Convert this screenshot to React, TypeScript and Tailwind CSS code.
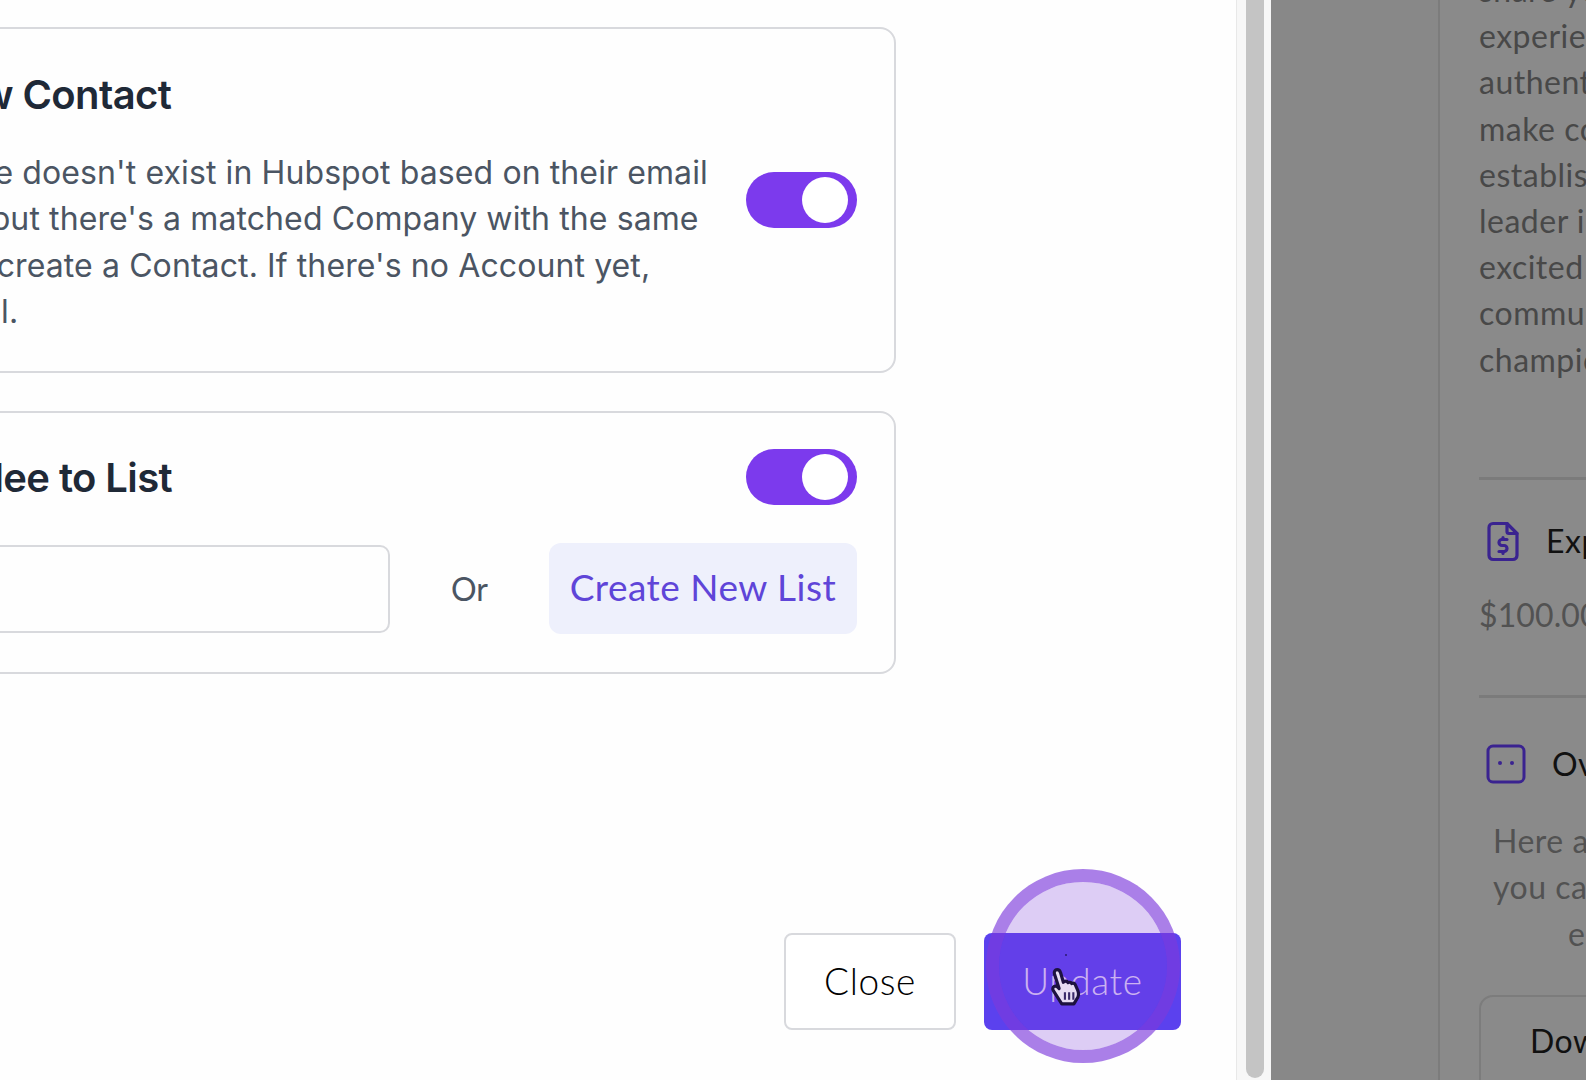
import { TbFileDollar } from 'react-icons/tb';

const inter = 'font-["Inter",sans-serif]';
const lato = 'font-["Lato",sans-serif]';

function Toggle() {
  return (
    <div className="flex h-[56px] w-[111px] shrink-0 items-center justify-end rounded-full bg-[#7c3aed] pr-[9px]">
      <div className="h-[46px] w-[46px] rounded-full bg-white" />
    </div>
  );
}

function HandCursor() {
  return (
    <svg viewBox="0 0 32 38" className="absolute left-[64px] top-[34px] h-[40px] w-[37px]">
      <path
        d="M7 2.500c2 0 3 1.400 3.400 3l2.600 9 1-.6c1.400-.7 2.800-.2 3.500 1 1.200-.8 2.700-.4 3.400.8 1.300-.6 2.700-.2 3.400 1l2.400 5.500c1.200 3 .7 6.200-1.100 8.500l-2.600 4.300H11.500L3.500 22.500c-1-1.500-.6-3.200.8-4 1.100-.6 2.300-.3 3.200.5l1.500 1.500L4.500 6.500C4 4.500 5.200 2.500 7 2.500z"
        fill="#e6dcf3"
        stroke="#1d1240"
        strokeWidth="3"
        strokeLinejoin="round"
      />
      <path d="M14.500 24v7M18.500 24v7M22.500 24v7" stroke="#3a2a6a" strokeWidth="2" />
    </svg>
  );
}

function SettingsPanel() {
  return (
    <div className="flex h-full w-[1237px] shrink-0 flex-col border-r border-[#e8e8e8] bg-[#fefefe]">
      <div className="ml-[-259px] flex w-[1155px] flex-col gap-[38px] pt-[27px]">
        <div className="flex h-[346px] flex-col rounded-[16px] border-2 border-[#d8d9dd] pl-[50px] pr-[37px] pt-[41px]">
          <h3 className={`${inter} text-[40px] font-semibold leading-[50px] tracking-[-0.6px] text-[#1f2937]`}>
            Create New Contact
          </h3>
          <div className="mt-[30px] flex items-start justify-between">
            <p className={`${inter} whitespace-nowrap text-[32px] leading-[46.300px] tracking-[0.1px] text-[#4b5563]`}>
              If the attendee doesn't exist in Hubspot based on their email
              <br />
              the address, but there's a matched Company with the same
              <br />
              web domain, create a Contact. If there's no Account yet,
              <br />
              do this as well.
            </p>
            <div className="mt-[22px]">
              <Toggle />
            </div>
          </div>
        </div>
        <div className="flex h-[263px] flex-col rounded-[16px] border-2 border-[#d8d9dd] pl-[50px] pr-[37px] pt-[35px]">
          <div className="flex items-center justify-between">
            <h3 className={`${inter} pt-[2px] text-[40px] font-semibold leading-[56px] tracking-[-0.6px] text-[#1f2937]`}>
              Add Attendee to List
            </h3>
            <Toggle />
          </div>
          <div className="mt-[37px] flex items-center">
            <div className="h-[88px] w-[597px] rounded-[10px] border-2 border-[#d8d9dd]" />
            <span className={`${lato} ml-[61px] text-[32px] text-[#4b5563]`}>Or</span>
            <button className={`${lato} ml-[61px] h-[91px] w-[308px] rounded-[12px] bg-[#eef0fc] pb-[3px] text-[37px] tracking-[0.5px] text-[#5f45d8]`}>
              Create New List
            </button>
          </div>
        </div>
      </div>
      <div className="mt-auto flex justify-end gap-[28px] pb-[50px] pr-[55px]">
        <button className={`${lato} h-[97px] w-[172px] rounded-[8px] border-2 border-[#d8d9dd] bg-white pb-[2px] text-[37px] font-light tracking-[0.6px] text-black`}>
          Close
        </button>
        <div className="relative">
          <button className={`${lato} h-[97px] w-[197px] rounded-[8px] bg-[#5b41ee] pb-[2px] text-[37px] font-light tracking-[0.6px] text-[#e6daf9]`}>
            Update
          </button>
          <div className="absolute left-[2px] top-[-64px] h-[194px] w-[194px] rounded-full border-[13px] border-[#7c3adc]/65 bg-[#7c3adc]/25 bg-clip-padding" />
          <div className="absolute left-[81px] top-[21px] h-[2px] w-[2px] rounded-full bg-[#2a1a70]" />
          <HandCursor />
        </div>
      </div>
    </div>
  );
}

function Scrollbar() {
  return (
    <div className="flex h-full w-[34px] shrink-0 bg-[#f7f7f7] pl-[9px] pr-[7px]">
      <div className="mb-[2px] h-[1078px] w-[18px] rounded-b-full bg-[#c4c4c4]" />
    </div>
  );
}

function DetailPanel() {
  const lines = ['share your', 'experience', 'authentic', 'make connections', 'establish', 'leader in', 'excited', 'community', 'champion'];
  return (
    <div className="flex h-full min-w-0 flex-1 bg-[#888888]">
      <div className="h-full w-[169px] shrink-0 border-r-2 border-[#7c7c7c]" />
      <div className={`${lato} min-w-0 flex-1 overflow-hidden bg-[#8a8a8a] pl-[39px] tracking-[0.5px]`}>
        <div className="mt-[-33px] w-[400px] text-[32px] leading-[46.200px] text-[#484848]">
          {lines.map((l) => (
            <div key={l} className="whitespace-nowrap">{l}</div>
          ))}
        </div>
        <div className="mt-[94px] h-[3px] w-[400px] bg-[#7b7b7b]" />
        <div className="mt-[35px] flex h-[53px] w-[400px] items-center text-[32px] text-[#111111]">
          <TbFileDollar className="h-[53px] w-[48px] text-[#3a2390]" strokeWidth={1.600} />
          <span className="ml-[19px] whitespace-nowrap">Expected Budget</span>
        </div>
        <div className="mt-[24px] w-[400px] text-[32px] leading-[46px] tracking-[0.1px] text-[#525252]">$100.00</div>
        <div className="mt-[57px] h-[3px] w-[400px] bg-[#7b7b7b]" />
        <div className="mt-[46px] flex h-[40px] w-[400px] items-center pl-[7px] text-[32px] text-[#111111]">
          <svg viewBox="0 0 40 40" className="h-[40px] w-[40px] text-[#3a2390]" fill="none" stroke="currentColor" strokeWidth="3">
            <rect x="2" y="2" width="36" height="36" rx="5" />
            <circle cx="14" cy="19" r="2" fill="currentColor" stroke="none" />
            <circle cx="26" cy="19" r="2" fill="currentColor" stroke="none" />
          </svg>
          <span className="ml-[26px] whitespace-nowrap">Overview</span>
        </div>
        <div className="mt-[34px] w-[400px] pl-[14px] text-[32px] leading-[46.500px] text-[#525252]">
          <div className="whitespace-nowrap">Here are</div>
          <div className="whitespace-nowrap">you can</div>
          <div className="whitespace-nowrap pl-[75px]">email</div>
        </div>
        <div className="mt-[38px] h-[120px] w-[400px] rounded-[14px] border-2 border-[#7c7c7c] pl-[49px] pt-[20px] text-[32px] text-[#111111]">
          Download
        </div>
      </div>
    </div>
  );
}

export default function App() {
  return (
    <div className="flex h-[1080px] w-[1586px] overflow-hidden bg-[#fefefe]">
      <SettingsPanel />
      <Scrollbar />
      <DetailPanel />
    </div>
  );
}
